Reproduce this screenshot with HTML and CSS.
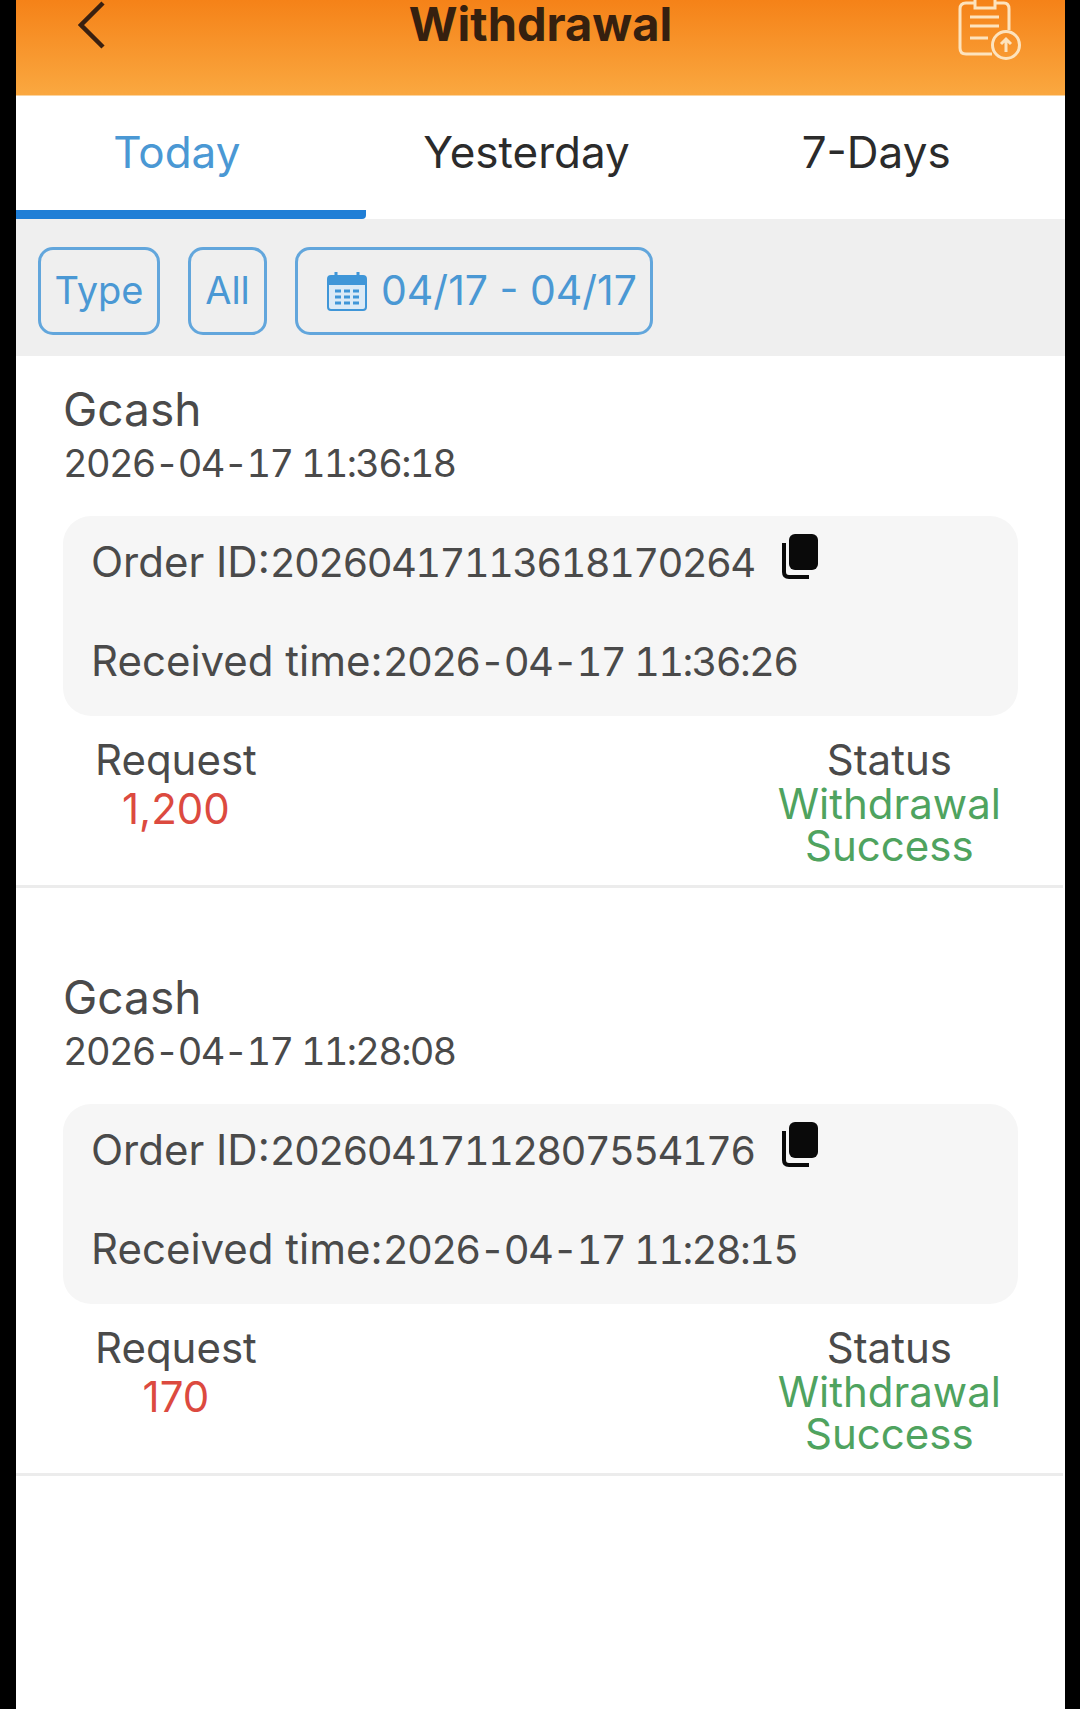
FILE: index.html
```html
<!DOCTYPE html>
<html lang="en">
<head>
    <meta charset="UTF-8">
    <meta name="viewport" content="width=device-width, initial-scale=1.0">
    <title>Withdrawal</title>
    <link rel="stylesheet" href="styles.css">
</head>
<body>
    <div class="screen">
        <header class="topbar">
            <svg class="back-icon" width="28" height="50" viewBox="0 0 28 50"><path d="M25 3 L3 25 L25 47" fill="none" stroke="#3a2010" stroke-width="4.5"/></svg>
            <h1>Withdrawal</h1>
            <svg class="record-icon" width="64" height="62" viewBox="0 0 64 62" fill="none" stroke="#fde3bd" stroke-width="3">
                <path d="M18 3 H9 Q3 3 3 9 V48 Q3 54 9 54 H35"/>
                <path d="M38 3 H47 Q52 3 52 9 V30"/>
                <path d="M18 -2 H38 V8 H18 Z"/>
                <path d="M13 17 H42 M13 26 H42 M13 38 H31"/>
                <circle cx="49" cy="45" r="13.5"/>
                <path d="M49 52 V39 M44 44 L49 39 L54 44"/>
            </svg>
        </header>

        <nav class="tabs">
            <div class="tab active">Today</div>
            <div class="tab">Yesterday</div>
            <div class="tab">7-Days</div>
        </nav>

        <div class="filters">
            <div class="filter filter-type">Type</div>
            <div class="filter filter-all">All</div>
            <div class="filter filter-date">
                <svg class="cal-icon" width="40" height="40" viewBox="0 0 40 40">
                    <rect x="1" y="5" width="38" height="34" rx="3" fill="#dbeaf6" stroke="#3f96d8" stroke-width="2"/>
                    <path d="M1 8 Q1 5 4 5 H36 Q39 5 39 8 V14 H1 Z" fill="#3f96d8"/>
                    <path d="M9 1 V8 M31 1 V8" stroke="#3f96d8" stroke-width="3"/>
                    <path d="M8 20 H32 M8 26 H32 M8 32 H32" stroke="#3f96d8" stroke-width="3" stroke-dasharray="6 3"/>
                </svg>
                <span>04/17 - 04/17</span>
            </div>
        </div>

        <section class="record">
            <div class="channel">Gcash</div>
            <div class="created num">2026-04-17 11:36:18</div>
            <div class="info">
                <div class="info-line"><span>Order ID:<span class="num">20260417113618170264</span></span>
                    <svg class="copy-icon" width="38" height="46" viewBox="0 0 38 46"><rect x="8" y="1" width="29" height="36" rx="6" fill="#0a0a0a"/><path d="M3 10 V39 Q3 44 8 44 H28" fill="none" stroke="#0a0a0a" stroke-width="4"/></svg>
                </div>
                <div class="info-line"><span>Received time:<span class="num">2026-04-17 11:36:26</span></span></div>
            </div>
            <div class="summary">
                <div class="col-request">
                    <div class="label">Request</div>
                    <div class="amount">1,200</div>
                </div>
                <div class="col-status">
                    <div class="label">Status</div>
                    <div class="state">Withdrawal<br>Success</div>
                </div>
            </div>
        </section>

        <section class="record">
            <div class="channel">Gcash</div>
            <div class="created num">2026-04-17 11:28:08</div>
            <div class="info">
                <div class="info-line"><span>Order ID:<span class="num">20260417112807554176</span></span>
                    <svg class="copy-icon" width="38" height="46" viewBox="0 0 38 46"><rect x="8" y="1" width="29" height="36" rx="6" fill="#0a0a0a"/><path d="M3 10 V39 Q3 44 8 44 H28" fill="none" stroke="#0a0a0a" stroke-width="4"/></svg>
                </div>
                <div class="info-line"><span>Received time:<span class="num">2026-04-17 11:28:15</span></span></div>
            </div>
            <div class="summary">
                <div class="col-request">
                    <div class="label">Request</div>
                    <div class="amount">170</div>
                </div>
                <div class="col-status">
                    <div class="label">Status</div>
                    <div class="state">Withdrawal<br>Success</div>
                </div>
            </div>
        </section>
    </div>
</body>
</html>
```

FILE: styles.css
```css
html, body {
    margin: 0;
    height: 100%;
    background-color: #000;
}
body {
    font-family: Inter, "Noto Sans", sans-serif;
    overflow: hidden;
}
.screen {
    margin: 0 15px 0 16px;
    height: 1709px;
    background-color: #fff;
    color: #4a4a4a;
}
.topbar {
    height: 95px;
    display: grid;
    grid-template-columns: 1fr auto 1fr;
    align-items: start;
    padding: 0 44px;
    background: linear-gradient(#f58218, #faa840);
    border-bottom: 1px solid #fbd49f;
}
.topbar h1 {
    margin: 0;
    font-size: 47px;
    line-height: 48px;
    font-weight: 700;
    color: #35200f;
}
.back-icon {
    margin-left: 18px;
}
.record-icon {
    justify-self: end;
}
.tabs {
    display: flex;
    height: 123px;
}
.tab {
    flex: 1;
    padding: 26px 28px 0 0;
    box-sizing: border-box;
    text-align: center;
    font-size: 44px;
    line-height: 60px;
    color: #2b2b2b;
}
.tab.active {
    color: #4a98d4;
    border-bottom: 9px solid #1f7ed6;
    border-radius: 0 0 4px 0;
}
.filters {
    display: flex;
    gap: 28px;
    height: 137px;
    box-sizing: border-box;
    padding: 28px 22px 0;
    background-color: #efefef;
}
.filter {
    height: 88px;
    box-sizing: border-box;
    display: flex;
    align-items: center;
    justify-content: center;
    gap: 14px;
    padding-bottom: 3px;
    border: 3px solid #62a6dc;
    border-radius: 15px;
    font-size: 38px;
    color: #4a98d4;
}
.filter-type { width: 122px; }
.filter-all { width: 79px; }
.filter-date {
    width: 358px;
    justify-content: flex-start;
    padding-left: 29px;
    font-size: 41px;
}
.cal-icon { margin-top: 3px; }
.num {
    font-size: 40px;
    font-variant-numeric: tabular-nums;
    letter-spacing: -1.7px;
}
.record {
    height: 532px;
    box-sizing: border-box;
    margin: 0 2px 56px 0;
    padding: 25px 2px 0 47px;
    border-bottom: 3px solid #ececec;
}
.channel {
    font-size: 46px;
    line-height: 56px;
}
.created {
    font-size: 38px;
    line-height: 52px;
}
.info {
    margin: 27px 43px 0 0;
    height: 200px;
    box-sizing: border-box;
    padding: 18px 28px;
    background-color: #f6f6f6;
    border-radius: 28px;
}
.info-line {
    display: flex;
    align-items: flex-start;
    gap: 26px;
    height: 99px;
    font-size: 42px;
    line-height: 56px;
}
.copy-icon {
    margin-top: -1px;
}
.summary {
    display: flex;
    justify-content: space-between;
    padding: 21px 60px 0 32px;
    font-size: 42px;
    line-height: 46px;
}
.col-request,
.col-status {
    text-align: center;
}
.amount {
    line-height: 52px;
    color: #dc4a3f;
}
.state {
    line-height: 42px;
    color: #4fa35f;
}
```
